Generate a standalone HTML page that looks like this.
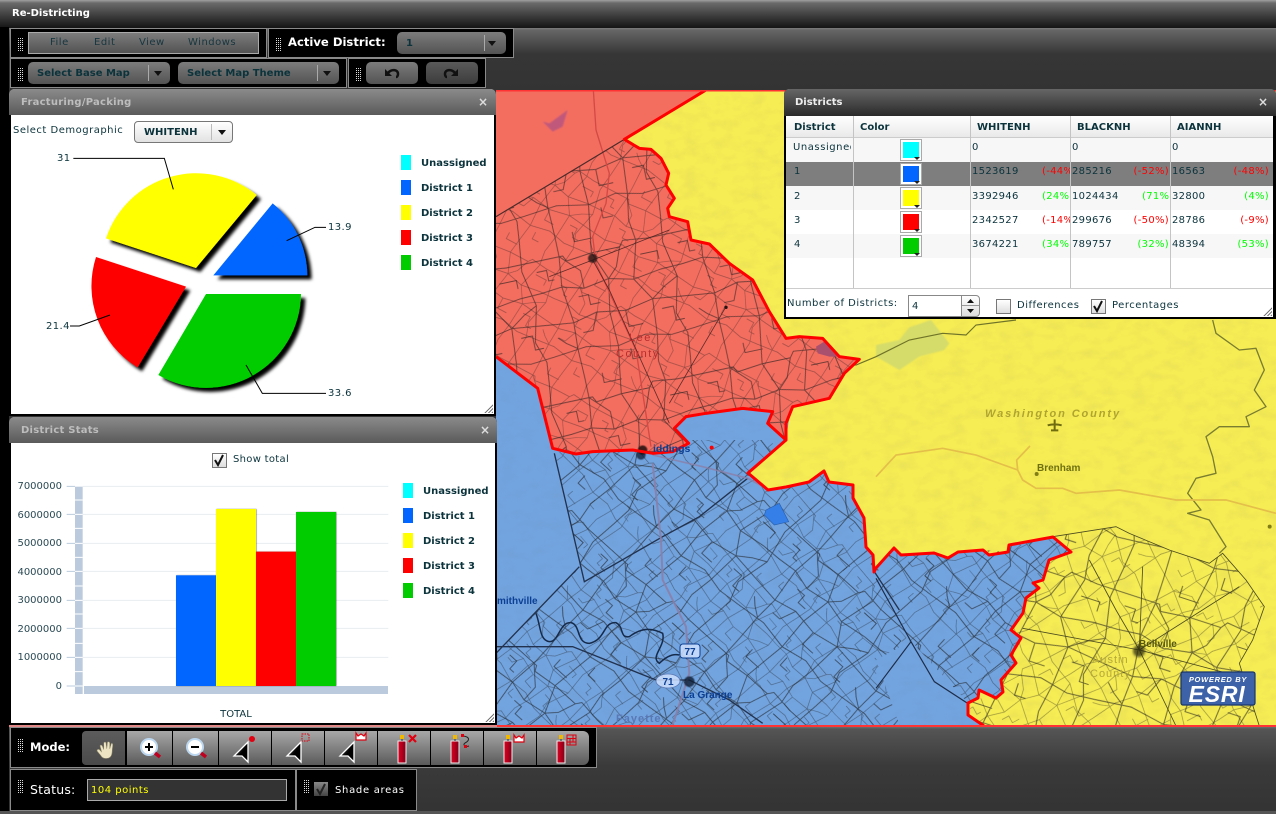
<!DOCTYPE html>
<html><head><meta charset="utf-8"><title>Re-Districting</title>
<style>
html,body{margin:0;padding:0;background:#333}
#p{position:relative;width:1276px;height:814px;overflow:hidden;background:#333;font-family:"DejaVu Sans","Liberation Sans",sans-serif;font-size:10px;color:#0b333c}
#p>*{position:absolute}
.a{position:absolute}
.t{position:absolute;white-space:nowrap;line-height:12px;letter-spacing:.5px}
.b{font-weight:bold;letter-spacing:0}
.tb{background:#000;border:1px solid #8a8a8a;box-sizing:border-box}
.grip{position:absolute;width:5px;background:repeating-linear-gradient(#000 0 1px,transparent 1px 2px),repeating-linear-gradient(90deg,#ddd 0 1px,#000 1px 2px)}
.combo{position:absolute;border-radius:5px;background:linear-gradient(#7c7c7c,#535353);box-sizing:border-box}
.combo .dv{position:absolute;top:3px;bottom:3px;width:1px;background:#aaa}
.combo .ar{position:absolute;top:9px;width:0;height:0;border-left:4px solid transparent;border-right:4px solid transparent;border-top:5px solid #111}
.panel{box-sizing:border-box;border:2px solid #000;border-top:0;background:#fff;border-radius:5px 5px 0 0}
.ttl{position:absolute;left:-2px;right:-2px;top:0;border-radius:5px 5px 0 0;background:linear-gradient(#8b8b8b,#5a5a5a)}
.gr{position:absolute;right:1px;bottom:1px;width:9px;height:9px;background:repeating-linear-gradient(135deg,transparent 0 1.5px,#777 1.5px 2.5px);clip-path:polygon(100% 0,100% 100%,0 100%)}
.cell{position:absolute;overflow:hidden;white-space:nowrap;line-height:24px;height:24px;letter-spacing:.3px}
.sw{position:absolute;width:16px;height:16px;border:2px solid #fff;outline:1px solid #aaa}
.sw i{position:absolute;right:-1px;bottom:-2px;width:0;height:0;border-left:3px solid transparent;border-right:3px solid transparent;border-top:3px solid #222}
.cb{position:absolute;width:13px;height:13px;border:1px solid #777;background:linear-gradient(#fff,#ddd);box-sizing:content-box}
.mb{position:absolute;top:731px;height:34px;background:linear-gradient(#a8a8a8,#5a5a5a)}
</style></head><body>
<div id="p">
<div style="left:0;top:0;width:1276px;height:28px;background:linear-gradient(#a0a0a0 0,#6a6a6a 3px,#3c3c3c 16px,#141414 100%)"></div>
<div style="left:0;top:28px;width:1276px;height:62px;background:linear-gradient(#7c7c7c 0,#666 2px,#363636 26px,#333 100%)"></div>
<div style="left:0;top:27px;width:9px;height:787px;background:#000"></div>
<div class="t b" style="left:12px;top:8px;color:#fff;font-size:10px">Re-Districting</div>

<!-- MAP -->
<svg style="left:0;top:0" width="1276" height="814" viewBox="0 0 1276 814">
<defs>
<pattern id="tile" width="200" height="200" patternUnits="userSpaceOnUse"><g fill="none" stroke="#1c1c1c" stroke-width="1.300"><path d="M0,30L40,30 44,38 80,34 120,34 126,26 160,30 200,30M0,75L30,72 60,80 96,74 130,82 170,76 200,75M0,120L36,124 70,116 110,122 150,114 200,120M0,165L46,160 90,168 130,160 166,168 200,165M35,0L35,30 30,72 36,124 34,160 35,200M85,0L80,34 96,74 88,120 90,168 85,200M140,0L144,30 130,82 150,114 146,165 140,200M185,0L180,40 190,90 178,140 188,170 185,200M35,30L60,55 60,80M120,34L110,60 96,74M70,116L60,140H46M110,122V145H130M150,114L170,100 190,90M0,45H14V60H22M146,50H170V62M60,0V14H85M160,130H176V150H188M10,140L20,150 34,160M106,175V190H120M50,90H64V104H78"/></g></pattern>
<pattern id="pLee" width="200" height="200" patternUnits="userSpaceOnUse" patternTransform="translate(500,100) rotate(-12) scale(.72)"><rect width="200" height="200" fill="url(#tile)"/></pattern>
<pattern id="pLee2" width="200" height="200" patternUnits="userSpaceOnUse" patternTransform="translate(530,130) rotate(28) scale(.5)"><rect width="200" height="200" fill="url(#tile)"/></pattern>
<pattern id="pFay" width="200" height="200" patternUnits="userSpaceOnUse" patternTransform="translate(520,440) rotate(42) scale(.68)"><rect width="200" height="200" fill="url(#tile)"/></pattern>
<pattern id="pFay2" width="200" height="200" patternUnits="userSpaceOnUse" patternTransform="translate(555,470) rotate(50) scale(.46)"><rect width="200" height="200" fill="url(#tile)"/></pattern>
<pattern id="pAus" width="200" height="200" patternUnits="userSpaceOnUse" patternTransform="translate(980,520) rotate(18) scale(.82)"><rect width="200" height="200" fill="url(#tile)"/></pattern>
<pattern id="pAus2" width="200" height="200" patternUnits="userSpaceOnUse" patternTransform="translate(1000,540) rotate(-28) scale(.55)"><rect width="200" height="200" fill="url(#tile)"/></pattern>
<clipPath id="cMap"><rect x="496" y="90" width="780" height="636"/></clipPath>
<clipPath id="cLee"><path transform="translate(496,90) scale(.33333)" d="M0,380L385,148 430,175 465,178 495,205 518,250 510,285 535,325 515,355 520,380 575,395 585,450 640,462 700,520 770,570 820,665 870,745 910,740 980,745 1030,800 1090,808 1045,850 1000,925 890,950 870,1000 870,1050 815,1000 830,965 740,955 630,970 570,980 535,1015 578,1060 530,1085 470,1090 410,1080 290,1085 240,1092 170,1075 125,895 0,800Z"/></clipPath>
<clipPath id="cFay"><path d="M554,452L584,582 579,567 496,653V726H900L876,660 911,641 968,703 968,715 968,703 978,698 979,690 996,698 1003,692 1001,680 1016,663 1011,655 1021,638 1011,630 1023,613 1026,598 1039,588 1033,583 1043,580 1049,560 1071,552 1053,537 1009,545 1008,552 983,550 958,552 948,558 934,553 901,555 894,548 876,568 874,572 873,555 866,547 864,518 853,498 853,485 829,482 824,471 809,482 786,487 768,490 748,473 786,439 768,423 773,412 743,408 706,413 686,417 674,428 690,443 660,452Z"/></clipPath>
<clipPath id="cAus"><path transform="translate(876,320) scale(.33333)" d="M530,650L720,620 760,640 880,690 1000,730 1040,700 1110,780 1165,860 1130,960 1090,1030 1150,1218H325L275,1185 275,1150 305,1135 360,1135 380,1115 375,1080 420,1030 405,1005 435,955 405,930 440,880 450,835 490,805 470,790 500,780 520,720 585,695Z"/></clipPath>
<filter id="tex" x="0" y="0" width="100%" height="100%"><feTurbulence type="fractalNoise" baseFrequency=".06 .1" numOctaves="3" seed="4"/><feColorMatrix values="0 0 0 0 .2 0 0 0 0 .2 0 0 0 0 .2 1.3 0 0 0 -.55"/></filter>
<filter id="bl"><feGaussianBlur stdDeviation="1.2"/></filter>
<filter id="bl2"><feGaussianBlur stdDeviation="2"/></filter>
<filter id="pieS" x="-20%" y="-20%" width="140%" height="140%"><feDropShadow dx="13" dy="12" stdDeviation="5" flood-color="#000"/></filter>
<filter id="barS" x="-10%" y="-10%" width="125%" height="120%"><feDropShadow dx="1.5" dy="0" stdDeviation="1.2" flood-color="#000" flood-opacity=".55"/></filter>
<linearGradient id="ag" x1="0" y1="0" x2="1" y2="1"><stop offset="0" stop-color="#777"/><stop offset=".55" stop-color="#000"/></linearGradient>
<linearGradient id="dg" x1="0" x2="1"><stop offset="0" stop-color="#e00020"/><stop offset="1" stop-color="#80001a"/></linearGradient>
</defs>
<g clip-path="url(#cMap)">
<rect x="496" y="90" width="780" height="636" fill="#f6ec53"/>
<path d="M496,350H800L786,439 748,473 768,490 786,487 809,482 824,471 829,482 853,485 853,498 864,518 866,547 873,555 874,572 876,568 894,548 901,555 934,553 948,558 958,552 983,550 989,555 1008,552 1009,545 1053,537 1071,552 1049,560 1043,580 1033,583 1039,588 1026,598 1023,613 1011,630 1021,638 1011,655 1016,663 1001,680 1003,692 996,698 979,690 978,698 968,703 968,715 984,726H496Z" fill="#72a4e0"/>
<rect x="496" y="90" width="780" height="636" filter="url(#tex)" opacity=".13"/>
<!-- water / rivers / highway on yellow -->
<g transform="translate(876,320) scale(.33333)" fill="none">
<path d="M0,75L70,60 100,22 165,0 220,70 205,90 130,110 70,150 0,110Z" fill="#d5dc6a" stroke="none" filter="url(#bl2)"/>
<path d="M-200,100L-150,130 -60,135 0,110 100,60 200,40 270,45 300,15 420,0" stroke="#6f7328" stroke-width="3.5"/>
<path d="M1010,0L1020,40 1090,90 1140,85 1165,150 1135,210 1170,260 1110,290 1120,320 1030,320 990,350 1010,410 1020,460 960,475 935,520 975,570 935,580 1000,600 1050,680 1030,700" stroke="#7a7d30" stroke-width="4" stroke-linejoin="round"/>
<path d="M0,470L60,405 200,385 300,405 425,450 440,480 480,505 560,505 600,520 730,510 900,540 1050,540 1200,580M425,450L422,420 462,378" stroke="#e4bf4a" stroke-width="5"/>
<g fill="#807d15" stroke="none"><circle cx="482" cy="462" r="6"/><circle cx="1181" cy="620" r="6"/></g>
<path d="M536,298V334M515,316C530,312 542,312 557,316M525,331H547" stroke="#6f6c10" stroke-width="6"/>
</g>
<!-- Austin roads -->
<g clip-path="url(#cAus)"><rect x="970" y="520" width="306" height="206" fill="url(#pAus)" opacity=".6"/><rect x="970" y="520" width="306" height="206" fill="url(#pAus2)" opacity=".42"/></g>
<g transform="translate(876,320) scale(.33333)" fill="none" stroke="#4a4a20" stroke-width="2.5">
<path d="M530,650L720,620 760,640 880,690 1000,730 1040,700 1110,780 1165,860 1130,960 1090,1030 1150,1218M640,720L720,870 790,990 900,1218M790,990L1090,800M790,990L440,925M790,990L1130,1080M790,990L800,740"/>
</g>
<circle cx="1139" cy="651" r="6" fill="#2b2b10" opacity=".75" filter="url(#bl)"/>
<!-- Fayette + blue roads -->
<g clip-path="url(#cFay)"><rect x="496" y="440" width="580" height="290" fill="url(#pFay)" opacity=".65"/><rect x="496" y="440" width="580" height="290" fill="url(#pFay2)" opacity=".5"/></g>
<g transform="translate(496,440) scale(.33333)" fill="none" stroke="#22324e">
<path d="M175,40L265,425 500,290 610,230 755,115M250,380L0,640M1135,395L1210,510M0,620L230,620 480,720 580,720 700,780 800,850" stroke-width="4"/>
<path d="M120,520C135,560 130,600 160,605 190,605 190,545 225,548 255,555 240,610 280,610 330,600 320,545 360,548 385,560 370,595 400,590 440,560 470,565 500,580 510,620 460,650 490,670 510,650 530,640 550,645" stroke-width="4.500" stroke="#162a4a"/>
<path d="M470,70L495,300 500,420 570,560 580,700 530,855" stroke="#8a80a8" stroke-width="6" opacity=".9"/>
<path d="M470,45L620,80 755,115 820,150" stroke="#8a80a8" stroke-width="5" opacity=".8"/>
<path d="M810,210L850,190 878,245 835,255 805,225Z" fill="#3580e8" stroke="#2a60b0" stroke-width="2"/>
<circle cx="580" cy="725" r="16" fill="#101a30" stroke="none" filter="url(#bl)" opacity=".8"/>
<circle cx="435" cy="45" r="14" fill="#101a30" stroke="none" filter="url(#bl)" opacity=".75"/>
</g>
<g transform="translate(876,320) scale(.33333)" fill="none" stroke="#1d2c48" stroke-width="3.5"><path d="M0,775L105,965 175,1085 275,1150M105,965L0,1105"/></g>
<!-- RED district -->
<path transform="translate(496,90) scale(.33333)" d="M0,0H630L385,148 430,175 465,178 495,205 518,250 510,285 535,325 515,355 520,380 575,395 585,450 640,462 700,520 770,570 820,665 870,745 910,740 980,745 1030,800 1090,808 1045,850 1000,925 890,950 870,1000 870,1050 815,1000 830,965 740,955 630,970 570,980 535,1015 578,1060 530,1085 470,1090 410,1080 290,1085 240,1092 170,1075 125,895 0,800Z" fill="#f46e60"/>
<g clip-path="url(#cLee)"><rect x="496" y="90" width="400" height="400" fill="url(#pLee)" opacity=".6"/><rect x="496" y="90" width="400" height="400" fill="url(#pLee2)" opacity=".42"/></g>
<g transform="translate(496,90) scale(.33333)" fill="none">
<path d="M140,95L160,100 215,60 200,110 170,125Z" fill="#c0587c" stroke="none" filter="url(#bl2)"/>
<path d="M960,770L985,755 1030,800 1000,800 965,790Z" fill="#a9506e" stroke="none"/>
<path d="M292,0L300,120 340,250 330,340 290,440 300,520 420,780 465,1070" stroke="#d24a45" stroke-width="4"/>
<path d="M0,380L385,148" stroke="#4a2a2a" stroke-width="3.500"/>
<path d="M290,510L160,560M290,510L520,420M290,510L340,600 520,1000M690,650L520,940" stroke="#3c1c1c" stroke-width="2.500" opacity=".8"/>
<circle cx="290" cy="505" r="14" fill="#241212" filter="url(#bl)" opacity=".8"/>
<circle cx="440" cy="1080" r="14" fill="#1a1010" filter="url(#bl)" opacity=".85"/>
<circle cx="690" cy="652" r="5" fill="#241212"/>
<circle cx="647" cy="1073" r="6" fill="#f00"/>
</g>
<!-- district borders -->
<g fill="none" stroke="#f00" stroke-width="3" stroke-linejoin="round">
<path transform="translate(496,90) scale(.33333)" stroke-width="9" d="M630,0L385,148 430,175 465,178 495,205 518,250 510,285 535,325 515,355 520,380 575,395 585,450 640,462 700,520 770,570 820,665 870,745 910,740 980,745 1030,800 1090,808 1045,850 1000,925 890,950 870,1000 870,1050 815,1000 830,965 740,955 630,970 570,980 535,1015 578,1060 530,1085 470,1090 410,1080 290,1085 240,1092 170,1075 125,895 0,800"/>
<path d="M786,440L748,473 768,490 786,487 809,482 824,471 829,482 853,485 853,498 864,518 866,547 873,555 874,572 876,568 894,548 901,555 934,553 948,558 958,552 983,550 989,555 1008,552 1009,545 1053,537 1071,552 1049,560 1043,580 1033,583 1039,588 1026,598 1023,613 1011,630 1021,638 1011,655 1016,663 1001,680 1003,692 996,698 979,690 978,698 968,703 968,715 984,726"/>
</g>
<rect x="496" y="90" width="780" height="1.5" fill="#f33"/>
<!-- map labels -->
<g font-family="'Liberation Sans',sans-serif">
<text x="629" y="341" font-size="11" fill="#b82e2e" letter-spacing="1.5">Lee</text>
<text x="616" y="357" font-size="11" fill="#b82e2e" letter-spacing="1.5">County</text>
<text x="653" y="452" font-size="10.500" font-weight="bold" fill="#0b3f94">iddings</text>
<text x="497" y="604" font-size="10" font-weight="bold" fill="#0b3f94">mithville</text>
<text x="683" y="698" font-size="10" font-weight="bold" fill="#0b3f94">La Grange</text>
<text x="616" y="722" font-size="11" font-weight="bold" fill="#5a78b4" letter-spacing="1">Fayette</text>
<text x="985" y="417" font-size="11" font-style="italic" font-weight="bold" fill="#b0a430" letter-spacing="1.900">Washington County</text>
<text x="1037" y="471" font-size="10" font-weight="bold" fill="#6e7010">Brenham</text>
<text x="1139" y="647" font-size="10" font-weight="bold" fill="#55570d">Bellville</text>
<text x="1092" y="663" font-size="11" fill="#b5a838" letter-spacing="1">Austin</text>
<text x="1090" y="677" font-size="11" fill="#b5a838" letter-spacing="1">County</text>
<rect x="680" y="644" width="20" height="14" rx="3" fill="#cfe0ff" fill-opacity=".85" stroke="#0b3f94"/>
<text x="690" y="655" font-size="10" font-weight="bold" text-anchor="middle" fill="#0b3f94">77</text>
<ellipse cx="668" cy="681" rx="12" ry="7" fill="#cfe0ff" fill-opacity=".85" stroke="#5a78b4" stroke-width=".8"/>
<text x="668" y="685" font-size="10" font-weight="bold" text-anchor="middle" fill="#0b3f94">71</text>
</g>
<rect x="1181" y="672" width="74" height="33" rx="2" fill="#3d62a8" stroke="#18356f" stroke-width="1.2"/>
<text x="1218" y="682" text-anchor="middle" font-family="'Liberation Sans',sans-serif" font-size="7.500" font-style="italic" font-weight="bold" fill="#fff" letter-spacing=".7">POWERED BY</text>
<text x="1217" y="702" text-anchor="middle" font-family="'Liberation Sans',sans-serif" font-size="23" font-style="italic" font-weight="bold" fill="#fff" letter-spacing=".8">ESRI</text>
</g>
</svg>

<!-- bottom background -->
<div style="left:0;top:726px;width:1276px;height:88px;background:linear-gradient(#7a7a7a 0,#555 3px,#3a3a3a 40px,#333 100%)"></div>
<div style="left:0;top:726px;width:9px;height:88px;background:#000"></div>
<div style="left:9px;top:725px;width:488px;height:2px;background:#e08888"></div>
<div style="left:497px;top:725px;width:779px;height:1.500px;background:#f33"></div>
<div style="left:0;top:811px;width:1276px;height:3px;background:#555"></div>

<!-- toolbars -->
<div class="tb" style="left:10px;top:28px;width:257px;height:30px"></div>
<div class="grip" style="left:18px;top:37px;height:14px"></div>
<div class="a" style="left:28px;top:32px;width:231px;height:22px;box-sizing:border-box;border:1px solid #aaa;background:linear-gradient(#7c7c7c,#535353)"></div>
<div class="t" style="left:50px;top:37px;color:#17363f">File</div>
<div class="t" style="left:94px;top:37px;color:#17363f">Edit</div>
<div class="t" style="left:139px;top:37px;color:#17363f">View</div>
<div class="t" style="left:188px;top:37px;color:#17363f">Windows</div>

<div class="tb" style="left:268px;top:28px;width:246px;height:30px"></div>
<div class="grip" style="left:276px;top:37px;height:14px"></div>
<div class="t b" style="left:288px;top:35px;color:#fff;font-size:11.600px;line-height:14px">Active District:</div>
<div class="combo" style="left:397px;top:32px;width:109px;height:22px"><span class="t b" style="left:9px;top:6px;color:#0b333c">1</span><span class="dv" style="left:87px"></span><span class="ar" style="left:91px"></span></div>

<div class="tb" style="left:10px;top:58px;width:337px;height:30px"></div>
<div class="grip" style="left:18px;top:67px;height:14px"></div>
<div class="combo" style="left:28px;top:62px;width:142px;height:22px"><span class="t b" style="left:9px;top:6px;color:#0b333c">Select Base Map</span><span class="dv" style="left:120px"></span><span class="ar" style="left:126px"></span></div>
<div class="combo" style="left:178px;top:62px;width:161px;height:22px"><span class="t b" style="left:9px;top:6px;color:#0b333c">Select Map Theme</span><span class="dv" style="left:139px"></span><span class="ar" style="left:145px"></span></div>

<div class="tb" style="left:348px;top:58px;width:138px;height:30px"></div>
<div class="grip" style="left:356px;top:67px;height:14px"></div>
<div class="combo" style="left:366px;top:62px;width:52px;height:22px"></div>
<div class="combo" style="left:426px;top:62px;width:52px;height:22px;background:linear-gradient(#5a5a5a,#3c3c3c)"></div>
<svg style="left:366px;top:62px" width="112" height="22" fill="none" stroke="#111" stroke-width="2.500"><path d="M22,11C25,7 32,7 32,12 32,14 31,15 30,15"/><path d="M19,7V14H26Z" fill="#111" stroke="none"/><path d="M89,11C86,7 79,7 79,12 79,14 80,15 81,15"/><path d="M92,7V14H85Z" fill="#111" stroke="none"/></svg>

<!-- Fracturing panel -->
<div class="panel" style="left:9px;top:89px;width:487px;height:327px"><div class="ttl" style="height:26px"></div><div class="gr"></div></div>
<div class="t b" style="left:21px;top:97px;color:#bdbdbd;letter-spacing:.25px">Fracturing/Packing</div>
<div class="t b" style="left:478px;top:96px;color:#ddd;font-size:12px">×</div>
<div class="t" style="left:13px;top:125px">Select Demographic</div>
<div class="a" style="left:134px;top:121px;width:99px;height:22px;box-sizing:border-box;border:1px solid #777;border-radius:4px;background:linear-gradient(#fff,#e2e2e2)"><span class="t b" style="left:9px;top:5px">WHITENH</span><span class="a" style="left:76px;top:2px;bottom:2px;width:1px;background:#bbb"></span><span class="a" style="left:83px;top:8px;width:0;height:0;border-left:4px solid transparent;border-right:4px solid transparent;border-top:5px solid #111"></span></div>

<svg style="left:0;top:0" width="1276" height="814" viewBox="0 0 1276 814" font-family="'DejaVu Sans',sans-serif" font-size="10" fill="#0b333c">
<g transform="translate(30,130) scale(.33333)">
<g filter="url(#pieS)">
<path d="M550,436L728,220A281,281 0 0 1 832,436Z" fill="#0066ff"/>
<path d="M498,414L680,195A285,285 0 0 0 228,325Z" fill="#ffff00"/>
<path d="M468,470L198,381A284,284 0 0 0 323,712Z" fill="#ff0000"/>
<path d="M528,492H813A285,285 0 0 1 385,735Z" fill="#00cc00"/>
</g>
<g fill="none" stroke="#000" stroke-width="3"><path d="M130,85H403L430,178M888,292H855L770,332M120,588H148L240,555M888,790H697L648,705"/></g>
</g>
<g letter-spacing=".4"><text x="57" y="161">31</text><text x="328" y="230">13.9</text><text x="46" y="329">21.4</text><text x="328" y="396">33.6</text></g>
<g font-weight="bold">
<text x="421" y="166">Unassigned</text><text x="421" y="191">District 1</text><text x="421" y="216">District 2</text><text x="421" y="241">District 3</text><text x="421" y="266">District 4</text>
</g>
<rect x="401" y="155" width="10" height="15" fill="#00ffff"/><rect x="401" y="180" width="10" height="15" fill="#0066ff"/><rect x="401" y="205" width="10" height="15" fill="#ffff00"/><rect x="401" y="230" width="10" height="15" fill="#ff0000"/><rect x="401" y="255" width="10" height="15" fill="#00cc00"/>
</svg>

<!-- District Stats panel -->
<div class="panel" style="left:9px;top:417px;width:488px;height:308px"><div class="ttl" style="height:26px"></div><div class="gr"></div></div>
<div class="t b" style="left:21px;top:425px;color:#bdbdbd;letter-spacing:.25px">District Stats</div>
<div class="t b" style="left:480px;top:424px;color:#ddd;font-size:12px">×</div>
<div class="cb" style="left:212px;top:453px"></div>
<svg style="left:212px;top:453px" width="15" height="15"><path d="M3,7L6,12 11,2" fill="none" stroke="#111" stroke-width="2"/></svg>
<div class="t" style="left:233px;top:454px;letter-spacing:.3px">Show total</div>

<svg style="left:0;top:0" width="1276" height="814" viewBox="0 0 1276 814" font-family="'DejaVu Sans',sans-serif" font-size="10" fill="#0b333c">
<g transform="translate(0,410) scale(.33333)">
<g stroke="#e9edf1" stroke-width="3"><path d="M248,229H1165M248,313H1165M248,400H1165M248,484H1165M248,571H1165M248,655H1165M248,742H1165"/></g>
<g stroke="#bbcbdd" stroke-width="3"><path d="M200,229H225M200,313H225M200,400H225M200,484H225M200,571H225M200,655H225M200,742H225M200,828H225"/></g>
<rect x="225" y="230" width="23" height="622" fill="#bbcbdd"/>
<rect x="252" y="828" width="912" height="24" fill="#bbcbdd"/>
<g stroke="#fff" stroke-width="3"><path d="M225,270H248M225,313H248M225,355H248M225,400H248M225,442H248M225,484H248M225,528H248M225,571H248M225,612H248M225,655H248M225,700H248M225,742H248M225,785H248M225,828H248"/></g>
<g filter="url(#barS)"><rect x="528" y="496" width="120" height="332" fill="#0066ff"/></g>
<g filter="url(#barS)"><rect x="888" y="306" width="120" height="522" fill="#00cc00"/></g>
<g filter="url(#barS)"><rect x="648" y="297" width="120" height="531" fill="#ffff00"/></g>
<g filter="url(#barS)"><rect x="768" y="425" width="120" height="403" fill="#ff0000"/></g>
<rect x="888" y="306" width="120" height="522" fill="#00cc00"/>
</g>
<g text-anchor="end" fill="#2b4a55"><text x="62" y="489">7000000</text><text x="62" y="518">6000000</text><text x="62" y="546">5000000</text><text x="62" y="575">4000000</text><text x="62" y="603">3000000</text><text x="62" y="632">2000000</text><text x="62" y="660">1000000</text><text x="62" y="689">0</text></g>
<text x="236" y="717" text-anchor="middle">TOTAL</text>
<g font-weight="bold"><text x="423" y="494">Unassigned</text><text x="423" y="519">District 1</text><text x="423" y="544">District 2</text><text x="423" y="569">District 3</text><text x="423" y="594">District 4</text></g>
<rect x="403" y="483" width="10" height="15" fill="#00ffff"/><rect x="403" y="508" width="10" height="15" fill="#0066ff"/><rect x="403" y="533" width="10" height="15" fill="#ffff00"/><rect x="403" y="558" width="10" height="15" fill="#ff0000"/><rect x="403" y="583" width="10" height="15" fill="#00cc00"/>
</svg>

<!-- Districts panel -->
<div class="panel" style="left:784px;top:89px;width:492px;height:230px;border-width:0 3px 2px 2px"><div class="ttl" style="left:-2px;right:-3px;height:27px;background:linear-gradient(#666,#2a2a2a)"></div><div class="gr"></div></div>
<div class="t b" style="left:795px;top:97px;color:#eee">Districts</div>
<div class="t b" style="left:1258px;top:96px;color:#ddd;font-size:12px">×</div>
<div class="a" style="left:786px;top:116px;width:487px;height:21px;background:linear-gradient(#fff,#e9e9e9)"></div>
<div class="a" style="left:786px;top:137px;width:487px;height:25px;background:#f7f7f7"></div>
<div class="a" style="left:786px;top:162px;width:487px;height:24px;background:#7e7e7e"></div>
<div class="a" style="left:786px;top:186px;width:487px;height:24px;background:#f7f7f7"></div>
<div class="a" style="left:786px;top:234px;width:487px;height:24px;background:#f7f7f7"></div>
<div class="a" style="left:786px;top:137px;width:487px;height:1px;background:#ccc"></div>
<div class="a" style="left:786px;top:288px;width:487px;height:1px;background:#ccc"></div>
<div class="a" style="left:853px;top:116px;width:1px;height:172px;background:#c4c4c4"></div>
<div class="a" style="left:970px;top:116px;width:1px;height:172px;background:#c4c4c4"></div>
<div class="a" style="left:1070px;top:116px;width:1px;height:172px;background:#c4c4c4"></div>
<div class="a" style="left:1170px;top:116px;width:1px;height:172px;background:#c4c4c4"></div>
<div class="t b" style="left:794px;top:122px">District</div>
<div class="t b" style="left:860px;top:122px">Color</div>
<div class="t b" style="left:977px;top:122px">WHITENH</div>
<div class="t b" style="left:1077px;top:122px">BLACKNH</div>
<div class="t b" style="left:1177px;top:122px">AIANNH</div>

<div class="cell" style="left:793px;top:136px;width:58px;letter-spacing:.55px">Unassigned</div>
<div class="cell" style="left:794px;top:160px;width:50px">1</div>
<div class="cell" style="left:794px;top:185px;width:50px">2</div>
<div class="cell" style="left:794px;top:209px;width:50px">3</div>
<div class="cell" style="left:794px;top:233px;width:50px">4</div>

<div class="sw" style="left:901px;top:140px;background:#00ffff"><i></i></div>
<div class="sw" style="left:901px;top:164px;background:#0066ff"><i></i></div>
<div class="sw" style="left:901px;top:188px;background:#ffff00"><i></i></div>
<div class="sw" style="left:901px;top:212px;background:#ff0000"><i></i></div>
<div class="sw" style="left:901px;top:236px;background:#00cc00"><i></i></div>

<div class="cell" style="left:972px;top:136px;width:90px">0</div><div class="cell" style="left:1072px;top:136px;width:90px">0</div><div class="cell" style="left:1172px;top:136px;width:90px">0</div>

<div class="cell" style="left:972px;top:160px;width:65px">1523619</div><div class="cell" style="left:1042px;top:160px;width:28px;color:#f00">(-44%)</div>
<div class="cell" style="left:1072px;top:160px;width:55px">285216</div><div class="cell" style="left:1120px;top:160px;width:49px;color:#f00;text-align:right">(-52%)</div>
<div class="cell" style="left:1172px;top:160px;width:50px">16563</div><div class="cell" style="left:1220px;top:160px;width:49px;color:#f00;text-align:right">(-48%)</div>

<div class="cell" style="left:972px;top:185px;width:65px">3392946</div><div class="cell" style="left:1042px;top:185px;width:28px;color:#0f0">(24%)</div>
<div class="cell" style="left:1072px;top:185px;width:55px">1024434</div><div class="cell" style="left:1142px;top:185px;width:28px;color:#0f0">(71%)</div>
<div class="cell" style="left:1172px;top:185px;width:50px">32800</div><div class="cell" style="left:1220px;top:185px;width:49px;color:#0f0;text-align:right">(4%)</div>

<div class="cell" style="left:972px;top:209px;width:65px">2342527</div><div class="cell" style="left:1042px;top:209px;width:28px;color:#f00">(-14%)</div>
<div class="cell" style="left:1072px;top:209px;width:55px">299676</div><div class="cell" style="left:1120px;top:209px;width:49px;color:#f00;text-align:right">(-50%)</div>
<div class="cell" style="left:1172px;top:209px;width:50px">28786</div><div class="cell" style="left:1220px;top:209px;width:49px;color:#f00;text-align:right">(-9%)</div>

<div class="cell" style="left:972px;top:233px;width:65px">3674221</div><div class="cell" style="left:1042px;top:233px;width:28px;color:#0f0">(34%)</div>
<div class="cell" style="left:1072px;top:233px;width:55px">789757</div><div class="cell" style="left:1120px;top:233px;width:49px;color:#0f0;text-align:right">(32%)</div>
<div class="cell" style="left:1172px;top:233px;width:50px">48394</div><div class="cell" style="left:1220px;top:233px;width:49px;color:#0f0;text-align:right">(53%)</div>

<div class="t" style="left:787px;top:298px">Number of Districts:</div>
<div class="a" style="left:908px;top:295px;width:54px;height:22px;box-sizing:border-box;border:1px solid #888;background:#fff"></div>
<div class="t" style="left:912px;top:301px">4</div>
<div class="a" style="left:961px;top:295px;width:19px;height:22px;box-sizing:border-box;border:1px solid #888;border-radius:0 4px 4px 0;background:linear-gradient(#fff,#ddd)"></div>
<div class="a" style="left:962px;top:305px;width:17px;height:1px;background:#999"></div>
<svg style="left:961px;top:295px" width="19" height="22"><path d="M6,8L9.500,4 13,8Z M6,14L9.500,18 13,14Z" fill="#111"/></svg>
<div class="cb" style="left:996px;top:299px"></div>
<div class="t" style="left:1017px;top:300px">Differences</div>
<div class="cb" style="left:1091px;top:299px"></div>
<svg style="left:1091px;top:299px" width="15" height="15"><path d="M3,7L6,12 11,2" fill="none" stroke="#111" stroke-width="2"/></svg>
<div class="t" style="left:1112px;top:300px">Percentages</div>

<!-- Mode bar -->
<div class="tb" style="left:10px;top:727px;width:587px;height:41px"></div>
<div class="grip" style="left:18px;top:738px;height:14px"></div>
<div class="t b" style="left:30px;top:740px;color:#fff;font-size:11.500px;line-height:14px">Mode:</div>
<div class="mb" style="left:82px;width:43px;background:linear-gradient(#5c5c5c,#4a4a4a);border-radius:4px 0 0 4px"></div>
<div class="mb" style="left:127px;width:45px"></div>
<div class="mb" style="left:173px;width:45px"></div>
<div class="mb" style="left:219px;width:52px"></div>
<div class="mb" style="left:272px;width:52px"></div>
<div class="mb" style="left:325px;width:52px"></div>
<div class="mb" style="left:378px;width:52px"></div>
<div class="mb" style="left:431px;width:52px"></div>
<div class="mb" style="left:484px;width:52px"></div>
<div class="mb" style="left:537px;width:52px;border-radius:0 6px 6px 0"></div>
<svg style="left:0;top:725px" width="600" height="50">
<!-- hand -->
<path transform="translate(97,17) scale(.75) translate(-93,-7)" d="M99,20L97,12Q98,10 100,12L102,17 102,8Q104,6 105,8L106,16 107,7Q109,6 110,8L110,16 112,9Q114,8 114,11L113,22Q112,29 105,29 100,29 98,25L93,19Q93,16 96,17Z" fill="#ece4c2" stroke="#8a8468" stroke-width=".7"/>
<!-- magnifiers -->
<g><circle cx="149" cy="22" r="8" fill="#fff" stroke="#bcd8f0" stroke-width="2"/><path d="M145,22H153M149,18V26" stroke="#000" stroke-width="2"/><path d="M155,28L160,32" stroke="#c00020" stroke-width="3.500"/></g>
<g><circle cx="195" cy="22" r="8" fill="#fff" stroke="#bcd8f0" stroke-width="2"/><path d="M191,22H199" stroke="#000" stroke-width="2"/><path d="M201,28L206,32" stroke="#c00020" stroke-width="3.500"/></g>
<!-- arrows -->
<g stroke="#fff" stroke-width="1.300" fill="url(#ag)"><path d="M234,31L248,17V37L242,31Z"/><path d="M287,31L301,17V37L295,31Z"/><path d="M340,31L354,17V37L348,31Z"/></g>
<circle cx="252" cy="14" r="3" fill="#e00010"/>
<rect x="302" y="9" width="7" height="7" fill="none" stroke="#e00010" stroke-dasharray="1.500 1"/>
<path d="M356,8L358,11 361,9 364,11 366,8V15H356Z" fill="#fff" stroke="#e00010" stroke-width="1.200"/>
<!-- dynamites -->
<g fill="url(#dg)" stroke="#eee" stroke-width="1"><rect x="398" y="16" width="8" height="22"/><rect x="451" y="16" width="8" height="22"/><rect x="504" y="16" width="8" height="22"/><rect x="557" y="16" width="8" height="22"/></g>
<g fill="#f0b800"><rect x="400" y="10" width="4" height="4"/><rect x="453" y="10" width="4" height="4"/><rect x="506" y="10" width="4" height="4"/><rect x="559" y="10" width="4" height="4"/></g>
<g stroke="#333" stroke-width="1"><path d="M402,14V16M455,14V16M508,14V16M561,14V16"/></g>
<path d="M409,10L416,17M416,10L409,17" stroke="#e00010" stroke-width="2.200"/>
<path d="M463,11C471,12 469,16 465,18 462,20 466,22 469,21" fill="none" stroke="#222"/><rect x="461" y="9" width="3" height="3" fill="#e00010"/><rect x="464" y="20" width="3" height="3" fill="#e00010"/>
<path d="M514,10L516,13 519,11 522,13 524,10V17H514Z" fill="#fff" stroke="#e00010" stroke-width="1.200"/>
<path d="M567,10H576V20H567ZM567,13.500H576M567,17H576M570,13.500V20M573,10V17" fill="none" stroke="#e00010"/>
</svg>

<!-- Status bar -->
<div class="tb" style="left:10px;top:769px;width:286px;height:42px"></div>
<div class="grip" style="left:18px;top:779px;height:14px"></div>
<div class="t" style="left:30px;top:783px;color:#fff;font-size:12.500px;line-height:14px;letter-spacing:.2px">Status:</div>
<div class="a" style="left:87px;top:779px;width:200px;height:22px;box-sizing:border-box;border:1px solid #aaa;background:#333"></div>
<div class="t" style="left:91px;top:785px;color:#ff0">104 points</div>
<div class="tb" style="left:296px;top:769px;width:121px;height:42px"></div>
<div class="grip" style="left:304px;top:779px;height:14px"></div>
<div class="a" style="left:314px;top:782px;width:14px;height:14px;background:linear-gradient(#888,#444)"></div>
<svg style="left:314px;top:782px" width="14" height="14"><path d="M3,7L6,12 11,2" fill="none" stroke="#222" stroke-width="2"/></svg>
<div class="t" style="left:335px;top:785px;color:#fff;letter-spacing:.7px">Shade areas</div>
</div>
</body></html>
